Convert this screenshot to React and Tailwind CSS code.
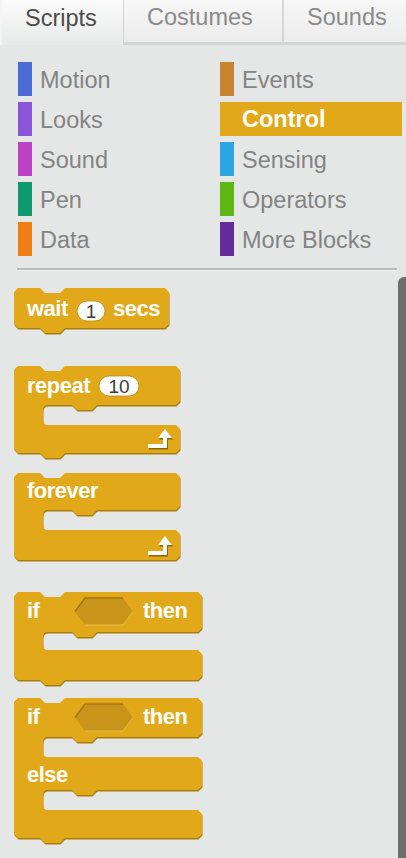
import React from 'react';

const FONT = "'Liberation Sans', Arial, sans-serif";
const BLOCK = '#e1a91a';
const SHADOW = '#a87c10';

const categories = [
  ['Motion', 'bg-[#4a6cd4]'],
  ['Events', 'bg-[#c88330]'],
  ['Looks', 'bg-[#8a55d7]'],
  ['Control', 'bg-[#e1a91a]'],
  ['Sound', 'bg-[#bb42c3]'],
  ['Sensing', 'bg-[#2ca5e2]'],
  ['Pen', 'bg-[#0e9a6c]'],
  ['Operators', 'bg-[#5cb712]'],
  ['Data', 'bg-[#ee7d16]'],
  ['More Blocks', 'bg-[#632d99]'],
];

// builds a scratch-style block outline; parts alternate arm / mouth heights
function blockPath(w, parts, bottomBump, I = 29) {
  let d = `M0 4 L4 0 L26 0 L31 5 L46 5 L51 0 L${w - 4} 0 L${w} 4`;
  let y = 0;
  parts.forEach((h, i) => {
    if (i % 2 === 0) {
      y += h;
      if (i < parts.length - 1) {
        d += ` L${w} ${y - 4} L${w - 4} ${y} L${I + 54} ${y} L${I + 49} ${y + 5} L${I + 34} ${y + 5} L${I + 29} ${y} L${I + 5} ${y} Q${I} ${y} ${I} ${y + 5}`;
      }
    } else {
      y += h;
      d += ` L${I} ${y - 5} Q${I} ${y} ${I + 5} ${y} L${w - 4} ${y} L${w} ${y + 4}`;
    }
  });
  d += ` L${w} ${y - 4} L${w - 4} ${y}`;
  if (bottomBump) d += ` L51 ${y} L46 ${y + 5} L31 ${y + 5} L26 ${y}`;
  d += ` L4 ${y} L0 ${y - 4} Z`;
  return { d, h: y };
}

function Block({ w, parts, bump = true, className = '', children }) {
  const { d, h } = blockPath(w, parts, bump);
  return (
    <svg width={w + 2} height={h + 7} className={`block ${className}`}>
      <path d={d} fill={SHADOW} transform="translate(0.5 1.5)" />
      <path d={d} fill={BLOCK} />
      {children}
    </svg>
  );
}

function Label({ x, y, children }) {
  return (
    <text x={x} y={y} fill="#fff" fontFamily={FONT} fontWeight="bold" fontSize="22" letterSpacing="-0.5">
      {children}
    </text>
  );
}

function Oval({ x, y, w, value }) {
  return (
    <g>
      <rect x={x} y={y} width={w} height={20} rx={10} fill="#fff" />
      <rect x={x} y={y} width={w} height={20} rx={10} fill="none" stroke="#b98c18" strokeWidth="0.8" />
      <text x={x + w / 2} y={y + 16.5} textAnchor="middle" fill="#3c3c3c" fontFamily={FONT} fontSize="19">
        {value}
      </text>
    </g>
  );
}

function Hexagon({ x, y }) {
  const w = 58, h = 27;
  const pts = `${x},${y + h / 2} ${x + 10},${y} ${x + w - 10},${y} ${x + w},${y + h / 2} ${x + w - 10},${y + h} ${x + 10},${y + h}`;
  return (
    <g>
      <polygon points={pts} fill="#c8951a" />
      <polyline
        points={`${x},${y + h / 2} ${x + 10},${y} ${x + w - 10},${y}`}
        fill="none"
        stroke="#9f7510"
        strokeWidth="1.5"
      />
      <polyline
        points={`${x + w},${y + h / 2} ${x + w - 10},${y + h} ${x + 10},${y + h}`}
        fill="none"
        stroke="#e9bc4c"
        strokeWidth="1"
      />
    </g>
  );
}

function LoopArrow({ x, y }) {
  const arrow = (dx, dy, color) => (
    <g transform={`translate(${x + dx} ${y + dy})`} fill={color} stroke={color}>
      <path d="M0 17 L17 17 L17 9" fill="none" strokeWidth="4" />
      <polygon points="10,9 24,9 17,0" stroke="none" />
    </g>
  );
  return (
    <g>
      {arrow(1, 1.5, '#8a650c')}
      {arrow(0, 0, '#fff')}
    </g>
  );
}

export default function App() {
  return (
    <div className="w-[406px] h-[858px] overflow-hidden bg-[#e5e7e7] flex flex-col" style={{ fontFamily: FONT }}>
      {/* tabs */}
      <div className="flex h-[45px] shrink-0">
        <div className="w-[124px] bg-gradient-to-b from-[#fbfbfb] to-[#e8e9e9] border-r border-[#d2d2d2] border-l-2 border-l-[#f4f4f4] flex items-center pl-[23px] pb-[8px] text-[23.5px] text-[#4b4b4b]">
          Scripts
        </div>
        <div className="w-[160px] bg-gradient-to-b from-[#f7f7f7] to-[#ececec] border-r-2 border-[#d6d6d6] border-b-[3px] border-b-[#d3d4d4] flex items-center pl-[23px] pb-[6px] text-[23.5px] text-[#8a8a8a]">
          Costumes
        </div>
        <div className="flex-1 bg-gradient-to-b from-[#f7f7f7] to-[#ececec] border-b-[3px] border-b-[#d3d4d4] flex items-center pl-[23px] pb-[6px] text-[23.5px] text-[#8a8a8a]">
          Sounds
        </div>
      </div>

      {/* categories */}
      <div className="grid grid-cols-[202px_182px] gap-y-[6px] pl-[18px] pt-[17px]">
        {categories.map(([name, color]) =>
          name === 'Control' ? (
            <div key={name} className="h-[34px] bg-[#e1a91a] flex items-center pl-[22px] pt-[2px] text-[23.5px] font-bold text-white">
              {name}
            </div>
          ) : (
            <div key={name} className="h-[34px] flex items-center gap-[8px] text-[23.5px] text-[#838383]">
              <span className={`w-[14px] h-[34px] ${color}`} />
              <span className="pt-[3px]">{name}</span>
            </div>
          )
        )}
      </div>

      <div className="ml-[17px] mr-[9px] mt-[12px] h-[3px] border-t-2 border-[#b9baba] border-b border-b-[#f1f2f2]" />

      {/* blocks */}
      <div className="flex flex-1 min-h-0">
        <div className="flex-1 flex flex-col items-start pl-[14px]">
          <Block w={155} parts={[40]} className="mt-[17px]">
            <Label x={13} y={28}>wait</Label>
            <Oval x={63} y={13} w={28} value="1" />
            <Label x={99} y={28}>secs</Label>
          </Block>

          <Block w={166} parts={[39, 20, 28]} className="mt-[31px]">
            <Label x={13} y={27}>repeat</Label>
            <Oval x={85} y={10} w={40} value="10" />
            <LoopArrow x={134} y={63} />
          </Block>

          <Block w={166} parts={[37, 20, 30]} bump={false} className="mt-[13px]">
            <Label x={13} y={25}>forever</Label>
            <LoopArrow x={134} y={63} />
          </Block>

          <Block w={188} parts={[40, 18, 30]} className="mt-[25px]">
            <Label x={13} y={26}>if</Label>
            <Hexagon x={61} y={6} />
            <Label x={129} y={26}>then</Label>
          </Block>

          <Block w={188} parts={[39, 20, 33, 20, 28]} className="mt-[11px]">
            <Label x={13} y={26}>if</Label>
            <Hexagon x={61} y={6} />
            <Label x={129} y={26}>then</Label>
            <Label x={13} y={84}>else</Label>
          </Block>
        </div>
        <div className="w-[8px] mt-[6px] bg-[#6d6e70] rounded-tl-[6px]" />
      </div>
    </div>
  );
}
